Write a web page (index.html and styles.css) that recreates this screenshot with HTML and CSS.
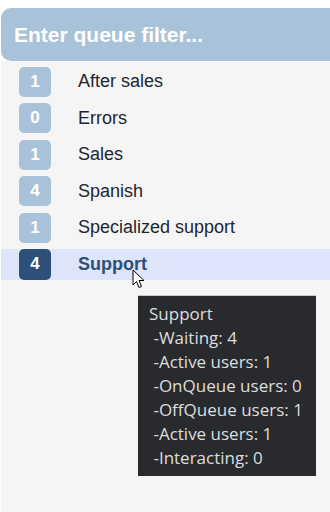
FILE: index.html
```html
<!DOCTYPE html>
<html lang="en">
<head>
    <meta charset="UTF-8">
    <meta name="viewport" content="width=device-width, initial-scale=1.0">
    <title>Queues</title>
    <link rel="stylesheet" href="styles.css">
</head>
<body>
    <div class="panel">
        <div class="filter">Enter queue filter...</div>
        <ul class="queues">
            <li class="queue"><span class="badge">1</span><span class="name">After sales</span></li>
            <li class="queue"><span class="badge">0</span><span class="name">Errors</span></li>
            <li class="queue"><span class="badge">1</span><span class="name">Sales</span></li>
            <li class="queue"><span class="badge">4</span><span class="name">Spanish</span></li>
            <li class="queue"><span class="badge">1</span><span class="name">Specialized support</span></li>
            <li class="queue selected"><span class="badge">4</span><span class="name">Support</span></li>
        </ul>
    </div>

    <svg class="cursor" width="14" height="21" viewBox="0 0 14 21">
        <path d="M1 1 L1 16 L4.5 12.5 L7 18.5 L9.5 17.5 L7 11.5 L12 11.5 Z" fill="#fff" stroke="#000" stroke-width="1" stroke-linejoin="miter"/>
    </svg>

    <div class="tooltip">Support
 -Waiting: 4
 -Active users: 1
 -OnQueue users: 0
 -OffQueue users: 1
 -Active users: 1
 -Interacting: 0</div>
</body>
</html>
```

FILE: styles.css
```css
body {
    margin: 0;
    padding: 0;
    background-color: #fff;
    font-family: 'Liberation Sans', Arial, sans-serif;
    overflow: hidden;
}

.panel {
    margin: 8px 0 0 1px;
}

.filter {
    height: 53px;
    box-sizing: border-box;
    padding: 0 13px;
    display: flex;
    align-items: center;
    background-color: #a8c3d9;
    border-radius: 10px 0 0 10px;
    color: #fff;
    font-size: 21px;
    font-weight: bold;
}

.queues {
    list-style: none;
    margin: 0;
    padding: 5px 0 0 0;
    height: calc(100vh - 61px);
    box-sizing: border-box;
    background-color: #f5f5f5;
}

.queue {
    display: flex;
    align-items: center;
    height: 31px;
    margin-bottom: 5.6px;
}

.badge {
    width: 32px;
    height: 30px;
    margin-left: 18px;
    margin-right: 27px;
    border-radius: 5px;
    background-color: #a8c3d9;
    color: #fff;
    font-weight: bold;
    font-size: 17px;
    display: flex;
    align-items: center;
    justify-content: center;
}

.name {
    font-size: 18px;
    color: #1f2530;
}

.selected {
    background-color: #dee4fa;
}

.selected .badge {
    height: 31px;
    background-color: #2c5079;
}

.selected .name {
    font-weight: bold;
    color: #2d5078;
}

.cursor {
    position: absolute;
    left: 132px;
    top: 269px;
}

.tooltip {
    position: absolute;
    left: 138px;
    top: 295px;
    width: 178px;
    box-sizing: border-box;
    padding: 6px 10px 6px 11px;
    background-color: #282a2e;
    border-top: 1px solid #c8c8c8;
    color: #dedede;
    font-family: 'Open Sans', sans-serif;
    font-size: 17px;
    line-height: 24px;
    white-space: pre;
}
```
